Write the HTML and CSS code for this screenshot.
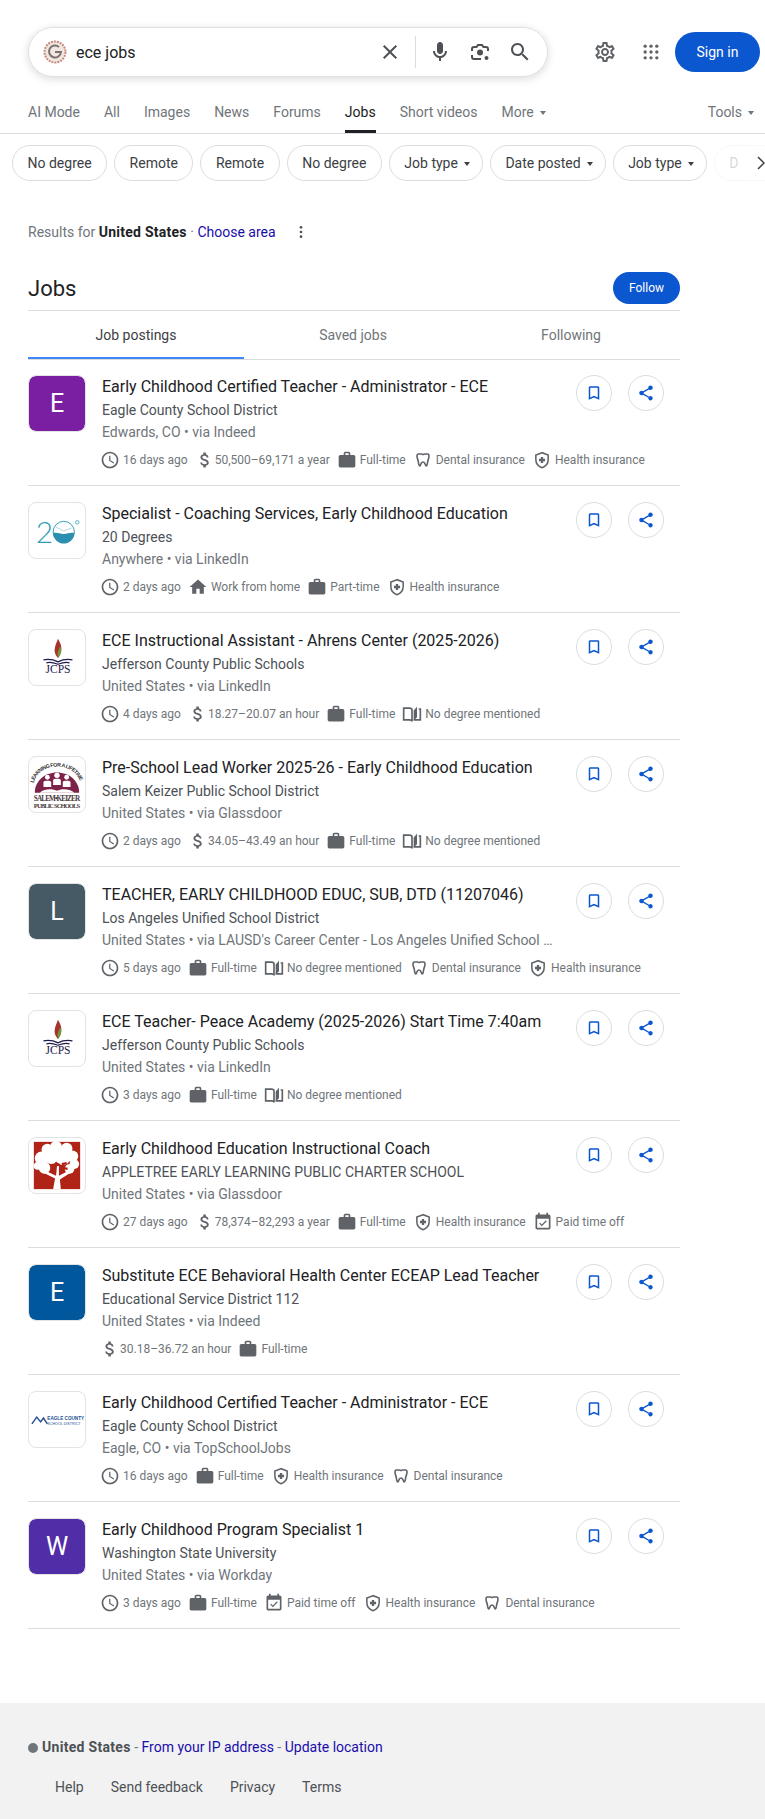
FILE: index.html
```html
<!DOCTYPE html>
<html lang="en">
<head>
    <meta charset="UTF-8">
    <meta name="viewport" content="width=device-width, initial-scale=1.0">
    <title>ece jobs - Search</title>
    <link rel="stylesheet" href="styles.css">
</head>
<body>

    <svg class="sprite" xmlns="http://www.w3.org/2000/svg">
        <symbol id="i-close" viewBox="0 0 24 24"><path d="M19 6.41L17.59 5 12 10.59 6.41 5 5 6.41 10.59 12 5 17.59 6.41 19 12 13.41 17.59 19 19 17.59 13.41 12z"/></symbol>
        <symbol id="i-mic" viewBox="0 0 24 24"><path d="M12 14c1.66 0 3-1.34 3-3V5c0-1.66-1.34-3-3-3S9 3.34 9 5v6c0 1.66 1.34 3 3 3z"/><path d="M17 11c0 2.76-2.24 5-5 5s-5-2.24-5-5H5c0 3.53 2.61 6.43 6 6.92V21h2v-3.08c3.39-.49 6-3.39 6-6.92h-2z"/></symbol>
        <symbol id="i-lens" viewBox="0 0 24 24"><path d="M4 11V9a2 2 0 0 1 2-2h2.5L10 5h4l1.5 2H18a2 2 0 0 1 2 2v2M4 15v2a2 2 0 0 0 2 2h7" fill="none" stroke="currentColor" stroke-width="2"/><circle cx="12" cy="12.5" r="3"/><circle cx="18.5" cy="18" r="2"/></symbol>
        <symbol id="i-search" viewBox="0 0 24 24"><path d="M15.5 14h-.79l-.28-.27C15.41 12.59 16 11.11 16 9.5 16 5.91 13.09 3 9.5 3S3 5.91 3 9.5 5.91 16 9.5 16c1.61 0 3.09-.59 4.23-1.57l.27.28v.79l5 4.99L20.49 19l-4.99-5zm-6 0C7.01 14 5 11.99 5 9.5S7.01 5 9.5 5 14 7.01 14 9.5 11.99 14 9.5 14z"/></symbol>
        <symbol id="i-gear" viewBox="0 0 24 24"><path d="M19.43 12.98c.04-.32.07-.64.07-.98 0-.34-.03-.66-.07-.98l2.11-1.65c.19-.15.24-.42.12-.64l-2-3.46c-.09-.16-.26-.25-.44-.25-.06 0-.12.01-.17.03l-2.49 1c-.52-.4-1.08-.73-1.69-.98l-.38-2.65C14.46 2.18 14.25 2 14 2h-4c-.25 0-.46.18-.49.42l-.38 2.65c-.61.25-1.17.59-1.69.98l-2.49-1c-.06-.02-.12-.03-.18-.03-.17 0-.34.09-.43.25l-2 3.46c-.13.22-.07.49.12.64l2.11 1.65c-.04.32-.07.65-.07.98 0 .33.03.66.07.98l-2.11 1.65c-.19.15-.24.42-.12.64l2 3.46c.09.16.26.25.44.25.06 0 .12-.01.17-.03l2.49-1c.52.4 1.08.73 1.69.98l.38 2.65c.03.24.24.42.49.42h4c.25 0 .46-.18.49-.42l.38-2.65c.61-.25 1.17-.59 1.69-.98l2.49 1c.06.02.12.03.18.03.17 0 .34-.09.43-.25l2-3.46c.12-.22.07-.49-.12-.64l-2.11-1.65zm-1.98-1.71c.04.31.05.52.05.73 0 .21-.02.43-.05.73l-.14 1.13.89.7 1.08.84-.7 1.21-1.27-.51-1.04-.42-.9.68c-.43.32-.84.56-1.25.73l-1.06.43-.16 1.13-.2 1.35h-1.4l-.19-1.35-.16-1.13-1.06-.43c-.43-.18-.83-.41-1.23-.71l-.91-.7-1.06.43-1.27.51-.7-1.21 1.08-.84.89-.7-.14-1.13c-.03-.31-.05-.54-.05-.74s.02-.43.05-.73l.14-1.13-.89-.7-1.08-.84.7-1.21 1.27.51 1.04.42.9-.68c.43-.32.84-.56 1.25-.73l1.06-.43.16-1.13.2-1.35h1.39l.19 1.35.16 1.13 1.06.43c.43.18.83.41 1.23.71l.91.7 1.06-.43 1.27-.51.7 1.21-1.07.85-.89.7.14 1.13zM12 8c-2.21 0-4 1.79-4 4s1.79 4 4 4 4-1.79 4-4-1.79-4-4-4zm0 6c-1.1 0-2-.9-2-2s.9-2 2-2 2 .9 2 2-.9 2-2 2z"/></symbol>
        <symbol id="i-apps" viewBox="0 0 24 24"><circle cx="5" cy="5" r="2"/><circle cx="12" cy="5" r="2"/><circle cx="19" cy="5" r="2"/><circle cx="5" cy="12" r="2"/><circle cx="12" cy="12" r="2"/><circle cx="19" cy="12" r="2"/><circle cx="5" cy="19" r="2"/><circle cx="12" cy="19" r="2"/><circle cx="19" cy="19" r="2"/></symbol>
        <symbol id="i-dots" viewBox="0 0 24 24"><circle cx="12" cy="5" r="2"/><circle cx="12" cy="12" r="2"/><circle cx="12" cy="19" r="2"/></symbol>
        <symbol id="i-bookmark" viewBox="0 0 24 24"><path d="M17 3H7c-1.1 0-1.99.9-1.99 2L5 21l7-3 7 3V5c0-1.1-.9-2-2-2zm0 15l-5-2.18L7 18V5h10v13z"/></symbol>
        <symbol id="i-share" viewBox="0 0 24 24"><path d="M18 16.08c-.76 0-1.44.3-1.96.77L8.91 12.7c.05-.23.09-.46.09-.7s-.04-.47-.09-.7l7.05-4.11c.54.5 1.25.81 2.04.81 1.66 0 3-1.34 3-3s-1.34-3-3-3-3 1.34-3 3c0 .24.04.47.09.7L8.04 9.81C7.5 9.31 6.79 9 6 9c-1.66 0-3 1.34-3 3s1.34 3 3 3c.79 0 1.5-.31 2.04-.81l7.12 4.16c-.05.21-.08.43-.08.65 0 1.61 1.31 2.92 2.92 2.92 1.61 0 2.92-1.31 2.92-2.92s-1.31-2.92-2.92-2.92z"/></symbol>
        <symbol id="i-clock" viewBox="0 0 24 24"><path d="M11.99 2C6.47 2 2 6.48 2 12s4.47 10 9.99 10C17.52 22 22 17.52 22 12S17.52 2 11.99 2zM12 20c-4.42 0-8-3.58-8-8s3.58-8 8-8 8 3.58 8 8-3.58 8-8 8zm.5-13H11v6l5.25 3.15.75-1.23-4.5-2.67z"/></symbol>
        <symbol id="i-money" viewBox="0 0 24 24"><path d="M11.8 10.9c-2.27-.59-3-1.2-3-2.15 0-1.09 1.01-1.85 2.7-1.85 1.78 0 2.44.85 2.5 2.1h2.21c-.07-1.72-1.12-3.3-3.21-3.81V3h-3v2.16c-1.94.42-3.5 1.68-3.5 3.61 0 2.31 1.91 3.46 4.7 4.13 2.5.6 3 1.48 3 2.41 0 .69-.49 1.79-2.7 1.79-2.06 0-2.87-.92-2.98-2.1h-2.2c.12 2.19 1.76 3.42 3.68 3.83V21h3v-2.15c1.95-.37 3.5-1.5 3.5-3.55 0-2.84-2.43-3.81-4.7-4.4z"/></symbol>
        <symbol id="i-work" viewBox="0 0 24 24"><path d="M20 6h-4V4c0-1.11-.89-2-2-2h-4c-1.11 0-2 .89-2 2v2H4c-1.11 0-1.99.89-1.99 2L2 19c0 1.11.89 2 2 2h16c1.11 0 2-.89 2-2V8c0-1.11-.89-2-2-2zm-6 0h-4V4h4v2z"/></symbol>
        <symbol id="i-home" viewBox="0 0 24 24"><path d="M10 20v-6h4v6h5v-8h3L12 3 2 12h3v8z"/></symbol>
        <symbol id="i-tooth" viewBox="-3 -3 30 30"><path d="M5 3h4.500c1 0 1.500.8 2.500.8s1.500-.8 2.500-.8H19c1.500 0 2 1.500 2 3.500 0 3-1.500 5-2 8s-.8 6.500-2 6.500c-1.500 0-1.500-6-5-6s-3.500 6-5 6c-1.200 0-1.500-3.500-2-6.500s-2-5-2-8C3 4.500 3.500 3 5 3z" fill="none" stroke="currentColor" stroke-width="2.400"/></symbol>
        <symbol id="i-shield" viewBox="-1 -1 26 26"><path d="M12 2.500 4 5.500v6c0 5 3.400 9 8 10.500 4.600-1.500 8-5.500 8-10.500v-6z" fill="none" stroke="currentColor" stroke-width="2"/><path d="M10.500 8h3v2.500H16v3h-2.500V16h-3v-2.500H8v-3h2.500z"/></symbol>
        <symbol id="i-book" viewBox="0 0 24 24"><path d="M2 5h7c1.500 0 3 1 3 2v14c0-1-1.500-2-3-2H2z" fill="none" stroke="currentColor" stroke-width="2"/><path d="M14 8c0-1 3-3 4-5v13c-1 1-3 3-4 4z"/><path d="M20 6h2v13h-8" fill="none" stroke="currentColor" stroke-width="2"/></symbol>
        <symbol id="i-event" viewBox="0 0 24 24"><path d="M16.530 11.060L15.470 10l-4.880 4.880-2.120-2.120-1.060 1.060L10.590 17l5.940-5.940zM19 3h-1V1h-2v2H8V1H6v2H5c-1.110 0-1.990.9-1.990 2L3 19c0 1.100.89 2 2 2h14c1.100 0 2-.9 2-2V5c0-1.100-.9-2-2-2zm0 16H5V8h14v11z"/></symbol>

        <symbol id="logo-jcps" viewBox="0 0 56 57">
            <path d="M29 9c2.500 4 4 8 3.500 12-.4 3-1.500 6-3.500 8-2-2-3.500-5-3.500-8 0-4 2-8 3.500-12z" fill="#a8322d"/>
            <path d="M31 17c2 2 2 7-2 12l-.5-5z" fill="#6f9a3c"/>
            <path d="M14 31c5-1 11 0 15 2 4-2 10-3 15-2M17 34c4-1 8 0 12 1.500 4-1.500 8-2.500 12-1.500" fill="none" stroke="#1e1b4b" stroke-width="1.300"/>
            <text x="29" y="45" class="logo-serif" font-size="12" text-anchor="middle" fill="#1e1b4b">JCPS</text>
        </symbol>
    </svg>

    <header class="topbar">
        <form class="searchbox">
            <svg class="doodle" viewBox="0 0 24 24">
                <circle cx="12" cy="12" r="10.500" fill="#efe7e2" stroke="#c98a80" stroke-width="2" stroke-dasharray="2 1"/>
                <path d="M12 12h6a6 6 0 1 1-2-5" fill="none" stroke="#80706c" stroke-width="2"/>
            </svg>
            <span class="query">ece jobs</span>
            <svg class="icon-24 box-close"><use href="#i-close"/></svg>
            <span class="box-sep"></span>
            <svg class="icon-24"><use href="#i-mic"/></svg>
            <svg class="icon-24"><use href="#i-lens"/></svg>
            <svg class="icon-24"><use href="#i-search"/></svg>
        </form>
        <svg class="icon-24 gear"><use href="#i-gear"/></svg>
        <svg class="icon-24 apps"><use href="#i-apps"/></svg>
        <a class="signin">Sign in</a>
    </header>

    <nav class="nav">
        <a class="nav-item">AI Mode</a>
        <a class="nav-item">All</a>
        <a class="nav-item">Images</a>
        <a class="nav-item">News</a>
        <a class="nav-item">Forums</a>
        <a class="nav-item selected">Jobs</a>
        <a class="nav-item">Short videos</a>
        <a class="nav-item">More<i class="caret"></i></a>
        <a class="nav-item tools">Tools<i class="caret"></i></a>
    </nav>

    <div class="chips">
        <span class="chip">No degree</span>
        <span class="chip">Remote</span>
        <span class="chip">Remote</span>
        <span class="chip">No degree</span>
        <span class="chip menu">Job type<i class="caret dark"></i></span>
        <span class="chip menu">Date posted<i class="caret dark"></i></span>
        <span class="chip menu">Job type<i class="caret dark"></i></span>
        <span class="chip menu faded">D</span>
        <svg class="chips-next" viewBox="0 0 8 14"><path d="M1 1l6 6-6 6" fill="none" stroke="#3c4043" stroke-width="1.500"/></svg>
    </div>

    <main class="main">
        <div class="results-for">
            <span>Results for <b>United States</b> · <a class="link">Choose area</a></span>
            <svg class="dots"><use href="#i-dots"/></svg>
        </div>

        <div class="jobs-head">
            <h2>Jobs</h2>
            <a class="follow">Follow</a>
        </div>

        <div class="jobs-tabs">
            <a class="jobs-tab active">Job postings</a>
            <a class="jobs-tab">Saved jobs</a>
            <a class="jobs-tab">Following</a>
        </div>

        <article class="job">
            <div class="logo letter purple">E</div>
            <div class="job-body">
                <div class="job-title">Early Childhood Certified Teacher - Administrator - ECE</div>
                <div class="job-company">Eagle County School District</div>
                <div class="job-place">Edwards, CO • via Indeed</div>
                <div class="meta">
                    <span class="tag"><svg class="icon-20"><use href="#i-clock"/></svg>16 days ago</span>
                    <span class="tag"><svg class="icon-20 money"><use href="#i-money"/></svg>50,500–69,171 a year</span>
                    <span class="tag"><svg class="icon-20"><use href="#i-work"/></svg>Full-time</span>
                    <span class="tag"><svg class="icon-20"><use href="#i-tooth"/></svg>Dental insurance</span>
                    <span class="tag"><svg class="icon-20"><use href="#i-shield"/></svg>Health insurance</span>
                </div>
            </div>
            <div class="job-actions">
                <button class="round"><svg><use href="#i-bookmark"/></svg></button>
                <button class="round"><svg><use href="#i-share"/></svg></button>
            </div>
        </article>

        <article class="job">
            <div class="logo">
                <svg viewBox="0 0 56 57">
                    <text x="6" y="41" class="logo-thin" font-size="31" fill="#2f9db5">2</text>
                    <circle cx="35" cy="30" r="11" fill="none" stroke="#2f9db5" stroke-width="1"/>
                    <path d="M24 31c4-1 7 1 11 1s7-2 11-1a11 11 0 0 1-22 0z" fill="#2a8fb0"/>
                    <path d="M27 25l8 4 8-3" fill="none" stroke="#9cc8d4" stroke-width=".8"/>
                    <circle cx="49" cy="20" r="1.800" fill="none" stroke="#2f9db5" stroke-width=".8"/>
                </svg>
            </div>
            <div class="job-body">
                <div class="job-title">Specialist - Coaching Services, Early Childhood Education</div>
                <div class="job-company">20 Degrees</div>
                <div class="job-place">Anywhere • via LinkedIn</div>
                <div class="meta">
                    <span class="tag"><svg class="icon-20"><use href="#i-clock"/></svg>2 days ago</span>
                    <span class="tag"><svg class="icon-20"><use href="#i-home"/></svg>Work from home</span>
                    <span class="tag"><svg class="icon-20"><use href="#i-work"/></svg>Part-time</span>
                    <span class="tag"><svg class="icon-20"><use href="#i-shield"/></svg>Health insurance</span>
                </div>
            </div>
            <div class="job-actions">
                <button class="round"><svg><use href="#i-bookmark"/></svg></button>
                <button class="round"><svg><use href="#i-share"/></svg></button>
            </div>
        </article>

        <article class="job">
            <div class="logo"><svg viewBox="0 0 56 57"><use href="#logo-jcps"/></svg></div>
            <div class="job-body">
                <div class="job-title">ECE Instructional Assistant - Ahrens Center (2025-2026)</div>
                <div class="job-company">Jefferson County Public Schools</div>
                <div class="job-place">United States • via LinkedIn</div>
                <div class="meta">
                    <span class="tag"><svg class="icon-20"><use href="#i-clock"/></svg>4 days ago</span>
                    <span class="tag"><svg class="icon-20 money"><use href="#i-money"/></svg>18.27–20.07 an hour</span>
                    <span class="tag"><svg class="icon-20"><use href="#i-work"/></svg>Full-time</span>
                    <span class="tag"><svg class="icon-20"><use href="#i-book"/></svg>No degree mentioned</span>
                </div>
            </div>
            <div class="job-actions">
                <button class="round"><svg><use href="#i-bookmark"/></svg></button>
                <button class="round"><svg><use href="#i-share"/></svg></button>
            </div>
        </article>

        <article class="job">
            <div class="logo">
                <svg viewBox="0 0 56 57">
                    <path d="M5 37c0-12 10-21 23-21s23 9 23 21z" fill="#7d2248"/>
                    <path id="arc" d="M3 29C6 16 16 10 28 10s22 6 25 19" fill="none"/>
                    <text class="logo-sans" font-size="5.500" font-weight="700" fill="#333"><textPath href="#arc" startOffset="2" textLength="62">LEARNING FOR A LIFETIME</textPath></text>
                    <circle cx="18" cy="21" r="2.500" fill="#fff"/><circle cx="28" cy="19" r="2.800" fill="#fff"/><circle cx="38" cy="21" r="2.500" fill="#fff"/>
                    <path d="M14 31v-5c0-2 8-2 8 0v5zM24 29v-5c0-2 8-2 8 0v5zM34 31v-5c0-2 8-2 8 0v5z" fill="#fff"/>
                    <path d="M10 37c6-5 14-4 18-2 4-2 12-3 18 2z" fill="#fff"/>
                    <text x="28" y="45.500" class="logo-serif" font-size="7.500" font-weight="700" text-anchor="middle" textLength="48" fill="#4a3a40">SALEM•KEIZER</text>
                    <text x="28" y="52.500" class="logo-serif" font-size="6.800" font-weight="700" text-anchor="middle" textLength="48" fill="#4a3a40">PUBLIC SCHOOLS</text>
                </svg>
            </div>
            <div class="job-body">
                <div class="job-title">Pre-School Lead Worker 2025-26 - Early Childhood Education</div>
                <div class="job-company">Salem Keizer Public School District</div>
                <div class="job-place">United States • via Glassdoor</div>
                <div class="meta">
                    <span class="tag"><svg class="icon-20"><use href="#i-clock"/></svg>2 days ago</span>
                    <span class="tag"><svg class="icon-20 money"><use href="#i-money"/></svg>34.05–43.49 an hour</span>
                    <span class="tag"><svg class="icon-20"><use href="#i-work"/></svg>Full-time</span>
                    <span class="tag"><svg class="icon-20"><use href="#i-book"/></svg>No degree mentioned</span>
                </div>
            </div>
            <div class="job-actions">
                <button class="round"><svg><use href="#i-bookmark"/></svg></button>
                <button class="round"><svg><use href="#i-share"/></svg></button>
            </div>
        </article>

        <article class="job">
            <div class="logo letter slate">L</div>
            <div class="job-body">
                <div class="job-title">TEACHER, EARLY CHILDHOOD EDUC, SUB, DTD (11207046)</div>
                <div class="job-company">Los Angeles Unified School District</div>
                <div class="job-place">United States • via LAUSD's Career Center - Los Angeles Unified School …</div>
                <div class="meta">
                    <span class="tag"><svg class="icon-20"><use href="#i-clock"/></svg>5 days ago</span>
                    <span class="tag"><svg class="icon-20"><use href="#i-work"/></svg>Full-time</span>
                    <span class="tag"><svg class="icon-20"><use href="#i-book"/></svg>No degree mentioned</span>
                    <span class="tag"><svg class="icon-20"><use href="#i-tooth"/></svg>Dental insurance</span>
                    <span class="tag"><svg class="icon-20"><use href="#i-shield"/></svg>Health insurance</span>
                </div>
            </div>
            <div class="job-actions">
                <button class="round"><svg><use href="#i-bookmark"/></svg></button>
                <button class="round"><svg><use href="#i-share"/></svg></button>
            </div>
        </article>

        <article class="job">
            <div class="logo"><svg viewBox="0 0 56 57"><use href="#logo-jcps"/></svg></div>
            <div class="job-body">
                <div class="job-title">ECE Teacher- Peace Academy (2025-2026) Start Time 7:40am</div>
                <div class="job-company">Jefferson County Public Schools</div>
                <div class="job-place">United States • via LinkedIn</div>
                <div class="meta">
                    <span class="tag"><svg class="icon-20"><use href="#i-clock"/></svg>3 days ago</span>
                    <span class="tag"><svg class="icon-20"><use href="#i-work"/></svg>Full-time</span>
                    <span class="tag"><svg class="icon-20"><use href="#i-book"/></svg>No degree mentioned</span>
                </div>
            </div>
            <div class="job-actions">
                <button class="round"><svg><use href="#i-bookmark"/></svg></button>
                <button class="round"><svg><use href="#i-share"/></svg></button>
            </div>
        </article>

        <article class="job">
            <div class="logo">
                <svg viewBox="0 0 56 57">
                    <rect x="4" y="4" width="48" height="49" fill="#b02418"/>
                    <g fill="#fff">
                        <circle cx="18" cy="12" r="6"/><circle cx="27" cy="9" r="6"/><circle cx="38" cy="11" r="6"/><circle cx="44" cy="19" r="6"/>
                        <circle cx="12" cy="21" r="7"/><circle cx="22" cy="19" r="8"/><circle cx="34" cy="20" r="8"/><circle cx="46" cy="27" r="5"/>
                        <circle cx="8" cy="29" r="4"/><circle cx="15" cy="31" r="6"/><circle cx="41" cy="32" r="5"/>
                        <path d="M24 53l2-11-12-6 2-2 11 5 1-10h2l0 10 10-5 2 2-11 7 1 10z"/>
                    </g>
                    <path d="M21 28l6 3M26 26l5 2M33 27l5-1M34 31l5 1M23 34l4 1" stroke="#b02418" stroke-width="2.400"/>
                </svg>
            </div>
            <div class="job-body">
                <div class="job-title">Early Childhood Education Instructional Coach</div>
                <div class="job-company">APPLETREE EARLY LEARNING PUBLIC CHARTER SCHOOL</div>
                <div class="job-place">United States • via Glassdoor</div>
                <div class="meta">
                    <span class="tag"><svg class="icon-20"><use href="#i-clock"/></svg>27 days ago</span>
                    <span class="tag"><svg class="icon-20 money"><use href="#i-money"/></svg>78,374–82,293 a year</span>
                    <span class="tag"><svg class="icon-20"><use href="#i-work"/></svg>Full-time</span>
                    <span class="tag"><svg class="icon-20"><use href="#i-shield"/></svg>Health insurance</span>
                    <span class="tag"><svg class="icon-20"><use href="#i-event"/></svg>Paid time off</span>
                </div>
            </div>
            <div class="job-actions">
                <button class="round"><svg><use href="#i-bookmark"/></svg></button>
                <button class="round"><svg><use href="#i-share"/></svg></button>
            </div>
        </article>

        <article class="job">
            <div class="logo letter blue">E</div>
            <div class="job-body">
                <div class="job-title">Substitute ECE Behavioral Health Center ECEAP Lead Teacher</div>
                <div class="job-company">Educational Service District 112</div>
                <div class="job-place">United States • via Indeed</div>
                <div class="meta">
                    <span class="tag"><svg class="icon-20 money"><use href="#i-money"/></svg>30.18–36.72 an hour</span>
                    <span class="tag"><svg class="icon-20"><use href="#i-work"/></svg>Full-time</span>
                </div>
            </div>
            <div class="job-actions">
                <button class="round"><svg><use href="#i-bookmark"/></svg></button>
                <button class="round"><svg><use href="#i-share"/></svg></button>
            </div>
        </article>

        <article class="job">
            <div class="logo">
                <svg viewBox="0 0 56 57">
                    <path d="M2 33l5-7 4 5 3-4 4 6" fill="none" stroke="#23508f" stroke-width="1.500"/>
                    <text x="18" y="29" class="logo-sans" font-size="4.800" font-weight="700" fill="#23508f">EAGLE COUNTY</text>
                    <text x="18" y="34" class="logo-sans" font-size="3.800" fill="#23508f">SCHOOL DISTRICT</text>
                </svg>
            </div>
            <div class="job-body">
                <div class="job-title">Early Childhood Certified Teacher - Administrator - ECE</div>
                <div class="job-company">Eagle County School District</div>
                <div class="job-place">Eagle, CO • via TopSchoolJobs</div>
                <div class="meta">
                    <span class="tag"><svg class="icon-20"><use href="#i-clock"/></svg>16 days ago</span>
                    <span class="tag"><svg class="icon-20"><use href="#i-work"/></svg>Full-time</span>
                    <span class="tag"><svg class="icon-20"><use href="#i-shield"/></svg>Health insurance</span>
                    <span class="tag"><svg class="icon-20"><use href="#i-tooth"/></svg>Dental insurance</span>
                </div>
            </div>
            <div class="job-actions">
                <button class="round"><svg><use href="#i-bookmark"/></svg></button>
                <button class="round"><svg><use href="#i-share"/></svg></button>
            </div>
        </article>

        <article class="job">
            <div class="logo letter violet">W</div>
            <div class="job-body">
                <div class="job-title">Early Childhood Program Specialist 1</div>
                <div class="job-company">Washington State University</div>
                <div class="job-place">United States • via Workday</div>
                <div class="meta">
                    <span class="tag"><svg class="icon-20"><use href="#i-clock"/></svg>3 days ago</span>
                    <span class="tag"><svg class="icon-20"><use href="#i-work"/></svg>Full-time</span>
                    <span class="tag"><svg class="icon-20"><use href="#i-event"/></svg>Paid time off</span>
                    <span class="tag"><svg class="icon-20"><use href="#i-shield"/></svg>Health insurance</span>
                    <span class="tag"><svg class="icon-20"><use href="#i-tooth"/></svg>Dental insurance</span>
                </div>
            </div>
            <div class="job-actions">
                <button class="round"><svg><use href="#i-bookmark"/></svg></button>
                <button class="round"><svg><use href="#i-share"/></svg></button>
            </div>
        </article>
    </main>

    <footer class="footer">
        <div class="footer-place">
            <i class="place-dot"></i><b>United States</b> - <a class="link">From your IP address</a> - <a class="link">Update location</a>
        </div>
        <div class="footer-links">
            <a>Help</a>
            <a>Send feedback</a>
            <a>Privacy</a>
            <a>Terms</a>
        </div>
    </footer>

</body>
</html>
```

FILE: styles.css
```css
body {
    margin: 0;
    background-color: #fff;
    font-family: Roboto, Arial, sans-serif;
    font-size: 14px;
    color: #202124;
}
.sprite {
    display: none;
}
svg {
    fill: currentColor;
}
.logo-serif {
    font-family: "Liberation Serif", serif;
}
.logo-sans {
    font-family: "Liberation Sans", sans-serif;
}
.logo-thin {
    font-family: Lato, sans-serif;
    font-weight: 300;
}

/* top bar */
.topbar {
    display: flex;
    align-items: center;
    padding: 27px 5px 0 28px;
}
.searchbox {
    display: flex;
    align-items: center;
    gap: 16px;
    box-sizing: border-box;
    width: 520px;
    height: 50px;
    padding: 0 15px 0 14px;
    background-color: #fff;
    border: 1px solid #dfe1e5;
    border-radius: 25px;
    box-shadow: 0 2px 8px rgba(32, 33, 36, 0.16);
}
.doodle {
    width: 24px;
    height: 24px;
    flex: none;
    margin-right: -7px;
}
.query {
    flex: 1;
    font-size: 16px;
    color: #202124;
}
.icon-24 {
    width: 24px;
    height: 24px;
    flex: none;
    color: #4d5156;
}
.box-close {
    margin-right: -3px;
}
.box-sep {
    width: 1px;
    height: 32px;
    margin-right: -4px;
    background-color: #dadce0;
}
.gear {
    margin-left: 45px;
    color: #5f6368;
}
.apps {
    margin-left: 22px;
    color: #5f6368;
    width: 20px;
    height: 20px;
    padding: 2px;
}
.signin {
    display: block;
    width: 85px;
    height: 40px;
    margin-left: 12px;
    border-radius: 20px;
    background-color: #0b57d0;
    color: #fff;
    text-align: center;
    line-height: 40px;
}

/* search tabs */
.nav {
    display: flex;
    gap: 24px;
    box-sizing: border-box;
    height: 42px;
    margin-top: 15px;
    padding: 0 11px 0 28px;
    border-bottom: 1px solid #dadce0;
}
.nav-item {
    display: block;
    box-sizing: border-box;
    height: 41px;
    line-height: 40px;
    color: #70757a;
    white-space: nowrap;
}
.nav-item.selected {
    color: #202124;
    border-bottom: 3px solid #202124;
}
.nav-item.tools {
    margin-left: auto;
}
.caret {
    display: inline-block;
    margin-left: 6px;
    vertical-align: middle;
    border-top: 4px solid #70757a;
    border-left: 3.5px solid transparent;
    border-right: 3.5px solid transparent;
}
.caret.dark {
    border-top-color: #3c4043;
}

/* filter chips */
.chips {
    display: flex;
    gap: 7px;
    height: 36px;
    margin-top: 11px;
    padding-left: 12px;
    overflow: hidden;
    position: relative;
}
.chip {
    flex: none;
    box-sizing: border-box;
    height: 36px;
    padding: 0 14.5px;
    border: 1px solid #dadce0;
    border-radius: 18px;
    line-height: 34px;
    color: #3c4043;
}
.chip.menu {
    padding-right: 12px;
}
.chip.faded {
    width: 80px;
    opacity: 0.2;
}
.chips-next {
    position: absolute;
    right: 0;
    top: 11px;
    width: 8px;
    height: 14px;
    background-color: #fff;
    box-shadow: 0 0 8px 8px #fff;
}

/* main column */
.main {
    width: 652px;
    margin: 41px 0 0 28px;
}
.link {
    color: #1a0dab;
}
.results-for {
    display: flex;
    align-items: center;
    height: 20px;
    color: #70757a;
}
.results-for b {
    font-weight: 700;
    letter-spacing: 0.25px;
    color: #202124;
}
.dots {
    width: 16px;
    height: 16px;
    margin-left: 17px;
    color: #4d5156;
}
.jobs-head {
    display: flex;
    align-items: center;
    justify-content: space-between;
    margin-top: 30px;
    padding-bottom: 6px;
    border-bottom: 1px solid #dadce0;
}
.jobs-head h2 {
    margin: 0;
    font-size: 22px;
    font-weight: 400;
    color: #202124;
}
.follow {
    display: block;
    width: 67px;
    height: 32px;
    border-radius: 16px;
    background-color: #0b57d0;
    color: #fff;
    font-size: 12px;
    line-height: 32px;
    text-align: center;
}
.jobs-tabs {
    display: grid;
    grid-template-columns: 216px 1fr 1fr;
    height: 48px;
    margin-bottom: -1px;
    border-bottom: 1px solid #dadce0;
}
.jobs-tab {
    box-sizing: border-box;
    height: 48px;
    line-height: 48px;
    text-align: center;
    color: #70757a;
}
.jobs-tab.active {
    color: #3c4043;
    border-bottom: 2px solid #4285f4;
}

/* job rows */
.job {
    display: flex;
    height: 127px;
    box-sizing: border-box;
    padding-top: 16px;
    border-bottom: 1px solid #dadce0;
}
.logo {
    flex: none;
    box-sizing: border-box;
    width: 58px;
    height: 57px;
    border: 1px solid #e3e3e3;
    border-radius: 8px;
    overflow: hidden;
    background-color: #fff;
}
.logo svg {
    display: block;
    width: 56px;
    height: 55px;
}
.letter {
    color: #fff;
    font-size: 25px;
    line-height: 55px;
    text-align: center;
    background-clip: padding-box;
}
.purple { background-color: #7b1fa2; }
.slate { background-color: #455a64; }
.blue { background-color: #01579b; }
.violet { background-color: #512da8; }
.job-body {
    flex: 1;
    min-width: 0;
    margin-left: 16px;
    padding-top: 2px;
}
.job-title {
    height: 20px;
    margin-bottom: 3px;
    font-size: 16px;
    line-height: 20px;
    color: #202124;
    white-space: nowrap;
}
.job-company {
    height: 20px;
    margin-bottom: 2px;
    line-height: 20px;
    color: #4d5156;
    white-space: nowrap;
}
.job-place {
    height: 20px;
    margin-bottom: 8px;
    line-height: 20px;
    color: #70757a;
    white-space: nowrap;
}
.meta {
    display: flex;
    gap: 7px;
    height: 20px;
    margin-left: -2px;
    font-size: 12px;
    line-height: 20px;
    color: #70757a;
    white-space: nowrap;
}
.tag {
    display: flex;
    align-items: center;
}
.icon-20 {
    width: 20px;
    height: 20px;
    flex: none;
    margin-right: 3px;
    color: #5f6368;
}
.icon-20.money {
    margin-right: 0;
}
.job-actions {
    display: flex;
    flex: none;
    gap: 16px;
    margin-left: 22px;
    margin-right: 16px;
}
.round {
    width: 36px;
    height: 36px;
    padding: 0;
    border: 1px solid #dadce0;
    border-radius: 50%;
    background-color: #fff;
    color: #0b57d0;
}
.round svg {
    display: block;
    width: 18px;
    height: 18px;
    margin: 0 auto;
}

/* footer */
.footer {
    box-sizing: border-box;
    height: 116px;
    margin-top: 74px;
    padding: 34px 0 0 28px;
    background-color: #f2f2f2;
    color: #70757a;
}
.footer-place {
    height: 20px;
    line-height: 20px;
}
.footer-place b {
    font-weight: 700;
    letter-spacing: 0.3px;
    color: #4d5156;
}
.place-dot {
    display: inline-block;
    width: 10px;
    height: 10px;
    margin-right: 4px;
    border-radius: 50%;
    background-color: #70757a;
    vertical-align: -1px;
}
.footer-links {
    display: flex;
    gap: 27px;
    margin-top: 20px;
    padding-left: 27px;
    line-height: 20px;
    color: #4d5156;
}
```
